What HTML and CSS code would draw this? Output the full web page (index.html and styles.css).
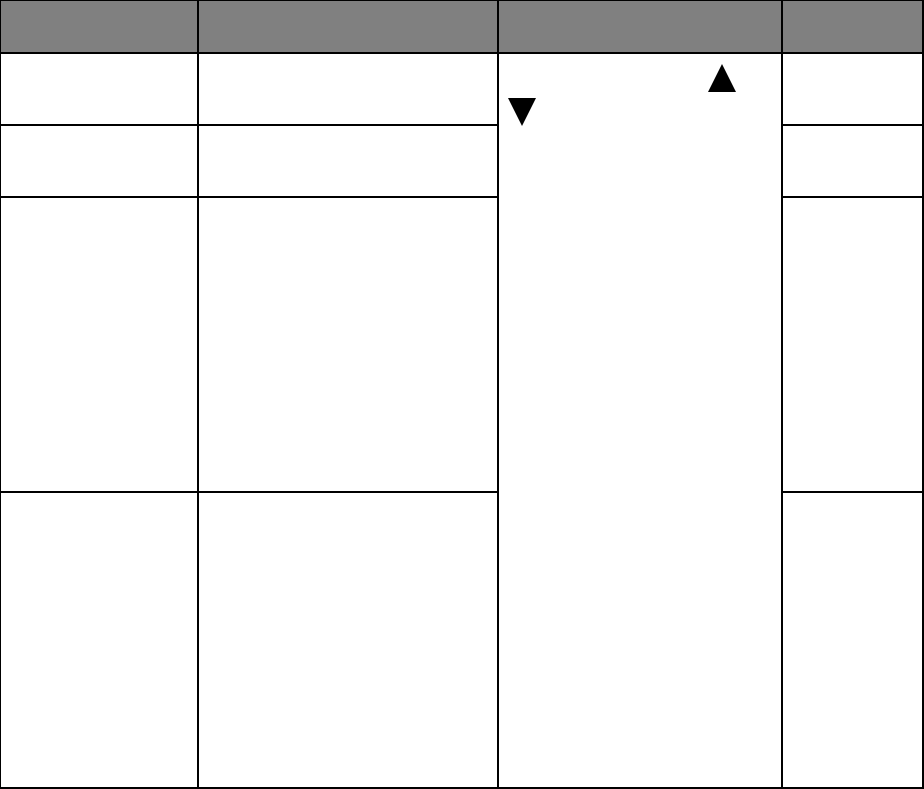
FILE: index.html
```html
<!DOCTYPE html>
<html>
<head>
<meta charset="utf-8">
<link rel="stylesheet" href="styles.css">
</head>
<body>
<div class="grid">
  <div class="cell head"></div>
  <div class="cell head"></div>
  <div class="cell head"></div>
  <div class="cell head"></div>

  <div class="cell r1"></div>
  <div class="cell r1"></div>
  <div class="cell span">
    <div class="tri-line up-line">
      <svg class="tri" width="28" height="28" viewBox="0 0 28 28"><polygon points="14,0 28,28 0,28" fill="#000"/></svg>
    </div>
    <div class="tri-line down-line">
      <svg class="tri" width="28" height="28" viewBox="0 0 28 28"><polygon points="0,0 28,0 14,28" fill="#000"/></svg>
    </div>
  </div>
  <div class="cell r1"></div>

  <div class="cell r2"></div>
  <div class="cell r2"></div>
  <div class="cell r2"></div>

  <div class="cell r3"></div>
  <div class="cell r3"></div>
  <div class="cell r3"></div>

  <div class="cell r4"></div>
  <div class="cell r4"></div>
  <div class="cell r4"></div>
</div>
</body>
</html>
```

FILE: styles.css
```css
html, body {
  margin: 0;
  padding: 0;
  background: #fff;
  overflow: hidden;
  font-family: "Liberation Sans", Arial, sans-serif;
}

.grid {
  display: grid;
  grid-template-columns: 196px 298px 282px 139px;
  grid-template-rows: 51px 70px 70px 293px 294px;
  gap: 2px;
  padding: 2px;
  background: #000;
  width: 925px;
  height: 790px;
  box-sizing: border-box;
  margin: -1px 0 0 -1px;
}

.cell {
  background: #fff;
}

.cell.head {
  background: #808080;
}

.cell.span {
  grid-column: 3;
  grid-row: 2 / span 4;
  padding: 10px 0 0 9px;
}

.tri-line {
  display: flex;
  height: 28px;
}

.tri {
  display: block;
}

.up-line {
  padding-left: 200px;
}

.down-line {
  margin-top: 6px;
}
```
